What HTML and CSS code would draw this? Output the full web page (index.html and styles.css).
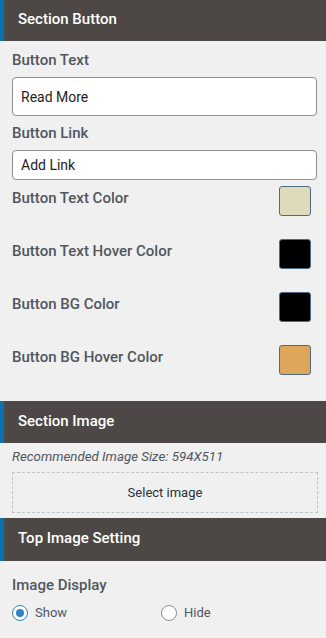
FILE: index.html
```html
<!DOCTYPE html>
<html lang="en">
<head>
    <meta charset="UTF-8">
    <meta name="viewport" content="width=device-width, initial-scale=1.0">
    <title>Section Settings</title>
    <link rel="stylesheet" href="styles.css">
</head>
<body>
    <div class="panel-head first">Section Button</div>
    <div class="panel-body button-body">
        <label class="field-label">Button Text</label>
        <input class="text-input tall" type="text" value="Read More">

        <label class="field-label">Button Link</label>
        <input class="text-input" type="text" value="Add Link">

        <div class="color-row">
            <span class="color-label">Button Text Color</span>
            <span class="swatch" style="background: #dedbbb;"></span>
        </div>
        <div class="color-row">
            <span class="color-label">Button Text Hover Color</span>
            <span class="swatch" style="background: #000;"></span>
        </div>
        <div class="color-row">
            <span class="color-label">Button BG Color</span>
            <span class="swatch" style="background: #000;"></span>
        </div>
        <div class="color-row">
            <span class="color-label">Button BG Hover Color</span>
            <span class="swatch" style="background: #dea65a;"></span>
        </div>
    </div>

    <div class="panel-head">Section Image</div>
    <div class="panel-body image-body">
        <p class="hint">Recommended Image Size: 594X511</p>
        <div class="upload-box">Select image</div>
    </div>

    <div class="panel-head last">Top Image Setting</div>
    <div class="panel-body display-body">
        <label class="field-label">Image Display</label>
        <div class="radio-group">
            <label class="radio"><span class="radio-dot checked"></span>Show</label>
            <label class="radio"><span class="radio-dot"></span>Hide</label>
        </div>
    </div>
</body>
</html>
```

FILE: styles.css
```css
body {
    margin: 0;
    background: #f0f0f0;
    font-family: Roboto, "Liberation Sans", sans-serif;
    color: #50575e;
    width: 326px;
}
.panel-head {
    height: 42px;
    box-sizing: border-box;
    background: #4d4846;
    border-left: 4px solid #0a72b0;
    color: #fff;
    font-size: 15px;
    font-weight: 500;
    line-height: 40px;
    padding-left: 14px;
}
.panel-head.first {
    height: 41px;
    line-height: 38px;
}
.panel-head.last {
    height: 43px;
}
.panel-body {
    padding: 0 9px 0 12px;
    display: flex;
    flex-direction: column;
}
.button-body {
    padding-bottom: 26px;
}
.field-label {
    display: block;
    font-size: 15px;
    font-weight: 500;
    line-height: 20px;
    margin-top: 9px;
    margin-bottom: 7px;
}
.text-input {
    box-sizing: border-box;
    width: 305px;
    height: 30px;
    border: 1px solid #8c8f94;
    border-radius: 4px;
    background: #fff;
    font-family: Roboto, "Liberation Sans", sans-serif;
    font-size: 14px;
    color: #1e1e1e;
    padding: 0 8px;
    margin: 0;
}
.text-input.tall {
    height: 39px;
    margin-bottom: -2px;
}
.color-row {
    display: flex;
    justify-content: space-between;
    align-items: flex-start;
    height: 30px;
    margin-top: 23px;
    padding-right: 6px;
}
.color-row:first-of-type {
    margin-top: 6px;
}
.color-label {
    font-size: 15px;
    font-weight: 500;
    line-height: 20px;
    margin-top: 2px;
}
.swatch {
    box-sizing: border-box;
    width: 32px;
    height: 30px;
    border: 1px solid #4f6b82;
    border-radius: 3px;
}
.image-body {
    padding-top: 5px;
    padding-bottom: 5px;
}
.hint {
    margin: 0;
    font-size: 13.3px;
    font-style: italic;
    line-height: 18px;
    color: #50575e;
}
.upload-box {
    box-sizing: border-box;
    margin-top: 6px;
    width: 306px;
    height: 41px;
    border: 1px dashed #c3c4c7;
    text-align: center;
    line-height: 39px;
    font-size: 13px;
    color: #2c3338;
}
.display-body {
    padding-top: 5px;
}
.radio-group {
    display: flex;
    margin-top: 3px;
}
.radio {
    display: flex;
    align-items: center;
    width: 149px;
    font-size: 13px;
    line-height: 16px;
}
.radio-dot {
    box-sizing: border-box;
    width: 16px;
    height: 16px;
    border: 1px solid #8c8f94;
    border-radius: 50%;
    background: #fff;
    margin-right: 7px;
    position: relative;
}
.radio-dot.checked {
    border-color: #3582c4;
}
.radio-dot.checked::after {
    content: "";
    position: absolute;
    left: 3px;
    top: 3px;
    width: 8px;
    height: 8px;
    border-radius: 50%;
    background: #3582c4;
}
```
